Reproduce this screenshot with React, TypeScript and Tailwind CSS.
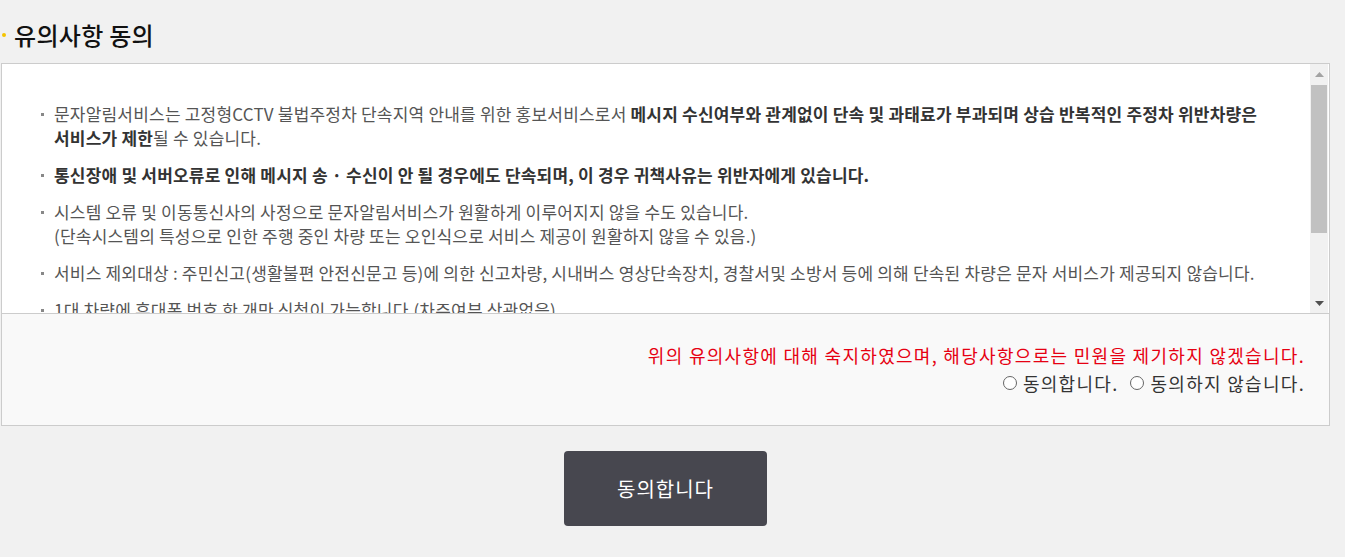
import React from 'react';

const font = { fontFamily: '"Noto Sans CJK KR", "Noto Sans", sans-serif' };

function Item({ children, bold }: { children: React.ReactNode; bold?: boolean }) {
  return (
    <li
      className={`relative pl-[52px] pr-[20px] text-[17px] tracking-[0.2px] leading-[24px] mb-[13px] break-keep ${
        bold ? 'font-bold text-[#333]' : 'text-[#555]'
      }`}
    >
      <span className="absolute left-[39px] top-[11px] w-[3px] h-[3px] bg-[#888]" />
      {children}
    </li>
  );
}

function Radio({ label }: { label: string }) {
  return (
    <label className="inline-flex items-center gap-[6px]">
      <span className="w-[14px] h-[14px] rounded-full border border-[#666] bg-white" />
      <span>{label}</span>
    </label>
  );
}

function ScrollBar() {
  return (
    <div className="w-[18px] shrink-0 flex flex-col bg-[#f1f1f1]">
      <div className="h-[20px] flex items-center justify-center">
        <svg width="9" height="5" viewBox="0 0 9 5">
          <path d="M0 5 L4.5 0 L9 5 Z" fill="#a3a3a3" />
        </svg>
      </div>
      <div className="h-[148px] mt-[1px] mx-[1px] bg-[#c1c1c1]" />
      <div className="flex-1" />
      <div className="h-[20px] flex items-center justify-center">
        <svg width="9" height="5" viewBox="0 0 9 5">
          <path d="M0 0 L9 0 L4.5 5 Z" fill="#505050" />
        </svg>
      </div>
    </div>
  );
}

export default function App() {
  return (
    <div className="min-h-[557px] bg-[#f1f1f1] pt-[18px]" style={font}>
      <h2 className="flex items-center h-[34px] text-[24px] tracking-[0.3px] font-medium text-[#111]">
        <span className="w-[4px] h-[4px] rounded-full bg-[#f5c400] ml-[2px] mr-[8px]" />
        유의사항 동의
      </h2>
      <div className="ml-[1px] w-[1329px] mt-[11px] border border-[#cccccc] bg-white">
        <div className="h-[249px] flex pr-[1px]">
          <div className="flex-1 overflow-hidden">
            <ul className="pt-[38px]">
              <Item>
                문자알림서비스는 고정형CCTV 불법주정차 단속지역 안내를 위한 홍보서비스로서{' '}
                <b className="text-[#333]">
                  메시지 수신여부와 관계없이 단속 및 과태료가 부과되며 상습 반복적인 주정차 위반차량은 서비스가 제한
                </b>
                될 수 있습니다.
              </Item>
              <Item bold>
                통신장애 및 서버오류로 인해 메시지 송 · 수신이 안 될 경우에도 단속되며, 이 경우 귀책사유는 위반자에게 있습니다.
              </Item>
              <Item>
                시스템 오류 및 이동통신사의 사정으로 문자알림서비스가 원활하게 이루어지지 않을 수도 있습니다.
                <br />
                (단속시스템의 특성으로 인한 주행 중인 차량 또는 오인식으로 서비스 제공이 원활하지 않을 수 있음.)
              </Item>
              <Item>
                서비스 제외대상 : 주민신고(생활불편 안전신문고 등)에 의한 신고차량, 시내버스 영상단속장치, 경찰서및 소방서 등에 의해 단속된 차량은 문자 서비스가 제공되지 않습니다.
              </Item>
              <Item>1대 차량에 휴대폰 번호 한 개만 신청이 가능합니다.(차주여부 상관없음)</Item>
            </ul>
          </div>
          <ScrollBar />
        </div>
        <div className="h-[112px] border-t border-[#cccccc] bg-[#f9f9f9] pr-[24px] pt-[27px] text-right text-[18px] tracking-[1.3px] leading-[28px]">
          <p className="text-[#e60012]">위의 유의사항에 대해 숙지하였으며, 해당사항으로는 민원을 제기하지 않겠습니다.</p>
          <div className="flex justify-end gap-[12px] text-[#333]">
            <Radio label="동의합니다." />
            <Radio label="동의하지 않습니다." />
          </div>
        </div>
      </div>
      <div className="flex justify-center w-[1331px] mt-[25px]">
        <button className="w-[203px] h-[75px] rounded-[4px] bg-[#47474f] text-white text-[20px] tracking-[1px]">
          동의합니다
        </button>
      </div>
    </div>
  );
}
